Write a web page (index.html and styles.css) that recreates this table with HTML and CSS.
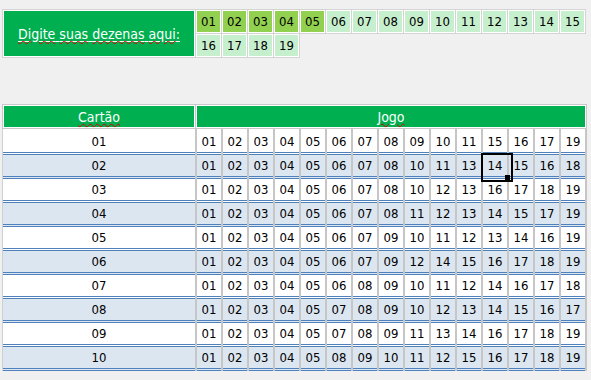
FILE: index.html
```html
<!DOCTYPE html>
<html lang="pt">
<head>
<meta charset="utf-8">
<title>Dezenas</title>
<link rel="stylesheet" href="styles.css">
</head>
<body>
<div class="top">
  <div class="prompt"><span class="link"><span class="sp">Digite</span> <span class="sp">suas</span> <span class="sp">dezenas</span> <span class="sp">aqui</span>:</span></div>
  <div class="n on">01</div><div class="n on">02</div><div class="n on">03</div><div class="n on">04</div><div class="n on">05</div>
  <div class="n">06</div><div class="n">07</div><div class="n">08</div><div class="n">09</div><div class="n">10</div>
  <div class="n">11</div><div class="n">12</div><div class="n">13</div><div class="n">14</div><div class="n">15</div>
  <div class="n first2">16</div><div class="n">17</div><div class="n">18</div><div class="n">19</div>
</div>

<div class="table">
  <div class="thead">
    <div><span class="sp">Cartão</span></div>
    <div><span class="sp">Jogo</span></div>
  </div>
  <div class="row r1"><div class="k">01</div><div class="c">01</div><div class="c">02</div><div class="c">03</div><div class="c">04</div><div class="c">05</div><div class="c">06</div><div class="c">07</div><div class="c">08</div><div class="c">09</div><div class="c">10</div><div class="c">11</div><div class="c">15</div><div class="c">16</div><div class="c">17</div><div class="c">19</div></div>
  <div class="row alt"><div class="k">02</div><div class="c">01</div><div class="c">02</div><div class="c">03</div><div class="c">04</div><div class="c">05</div><div class="c">06</div><div class="c">07</div><div class="c">08</div><div class="c">10</div><div class="c">11</div><div class="c">13</div><div class="c act">14</div><div class="c">15</div><div class="c">16</div><div class="c">18</div></div>
  <div class="row"><div class="k">03</div><div class="c">01</div><div class="c">02</div><div class="c">03</div><div class="c">04</div><div class="c">05</div><div class="c">06</div><div class="c">07</div><div class="c">08</div><div class="c">10</div><div class="c">12</div><div class="c">13</div><div class="c">16</div><div class="c">17</div><div class="c">18</div><div class="c">19</div></div>
  <div class="row alt"><div class="k">04</div><div class="c">01</div><div class="c">02</div><div class="c">03</div><div class="c">04</div><div class="c">05</div><div class="c">06</div><div class="c">07</div><div class="c">08</div><div class="c">11</div><div class="c">12</div><div class="c">13</div><div class="c">14</div><div class="c">15</div><div class="c">17</div><div class="c">19</div></div>
  <div class="row"><div class="k">05</div><div class="c">01</div><div class="c">02</div><div class="c">03</div><div class="c">04</div><div class="c">05</div><div class="c">06</div><div class="c">07</div><div class="c">09</div><div class="c">10</div><div class="c">11</div><div class="c">12</div><div class="c">13</div><div class="c">14</div><div class="c">16</div><div class="c">19</div></div>
  <div class="row alt"><div class="k">06</div><div class="c">01</div><div class="c">02</div><div class="c">03</div><div class="c">04</div><div class="c">05</div><div class="c">06</div><div class="c">07</div><div class="c">09</div><div class="c">12</div><div class="c">14</div><div class="c">15</div><div class="c">16</div><div class="c">17</div><div class="c">18</div><div class="c">19</div></div>
  <div class="row"><div class="k">07</div><div class="c">01</div><div class="c">02</div><div class="c">03</div><div class="c">04</div><div class="c">05</div><div class="c">06</div><div class="c">08</div><div class="c">09</div><div class="c">10</div><div class="c">11</div><div class="c">12</div><div class="c">14</div><div class="c">16</div><div class="c">17</div><div class="c">18</div></div>
  <div class="row alt"><div class="k">08</div><div class="c">01</div><div class="c">02</div><div class="c">03</div><div class="c">04</div><div class="c">05</div><div class="c">07</div><div class="c">08</div><div class="c">09</div><div class="c">10</div><div class="c">12</div><div class="c">13</div><div class="c">14</div><div class="c">15</div><div class="c">16</div><div class="c">17</div></div>
  <div class="row"><div class="k">09</div><div class="c">01</div><div class="c">02</div><div class="c">03</div><div class="c">04</div><div class="c">05</div><div class="c">07</div><div class="c">08</div><div class="c">09</div><div class="c">11</div><div class="c">13</div><div class="c">14</div><div class="c">16</div><div class="c">17</div><div class="c">18</div><div class="c">19</div></div>
  <div class="row alt"><div class="k">10</div><div class="c">01</div><div class="c">02</div><div class="c">03</div><div class="c">04</div><div class="c">05</div><div class="c">08</div><div class="c">09</div><div class="c">10</div><div class="c">11</div><div class="c">12</div><div class="c">15</div><div class="c">16</div><div class="c">17</div><div class="c">18</div><div class="c">19</div></div>
</div>
</body>
</html>
```
FILE: styles.css
```css
* { box-sizing: border-box; }

body {
  margin: 0;
  background: #f0f0f0;
  color: #000;
  font-family: "DejaVu Sans Condensed", "DejaVu Sans", Verdana, sans-serif;
  font-size: 13px;
}

/* top picker */
.top {
  display: grid;
  grid-template-columns: 192px repeat(15, 25px);
  grid-template-rows: 23px 23px;
  gap: 1px;
  padding: 1px;
  width: 584px;
  margin: 9px 0 0 2px;
}

.top > div {
  border: 1px solid #fff;
  box-shadow: 0 0 0 1px #d4d4d4;
  display: flex;
  align-items: center;
  justify-content: center;
}

.prompt {
  grid-row: span 2;
  background: #00b050;
  color: #fff;
  font-size: 14px;
}

.link {
  text-decoration: underline #fff;
  text-underline-offset: 2px;
}

.sp {
  text-decoration: underline wavy #e00000;
  text-decoration-thickness: 1px;
  text-underline-offset: 1px;
}

.n { background: #c6efce; }
.n.on { background: #92d050; }
.first2 { grid-column: 2; }

/* table */
.table {
  margin: 46px 0 0 2px;
  width: 585px;
}

.thead {
  display: grid;
  grid-template-columns: 192px 390px;
  grid-template-rows: 23px;
  gap: 1px;
  padding: 1px;
}

.thead > div {
  background: #00b050;
  border: 1px solid #fff;
  box-shadow: 0 0 0 1px #c8c8c8;
  color: #fff;
  font-size: 14px;
  display: flex;
  align-items: center;
  justify-content: center;
}

.row {
  display: flex;
  height: 24px;
  background: #fff;
  border-left: 1px solid #d0d0d0;
  border-right: 2px solid #c6c6c6;
}

.row.r1 { height: 26px; }
.row.alt { background: #dce6f1; }

.k, .c {
  display: flex;
  align-items: center;
  justify-content: center;
  padding-bottom: 3px;
  background: linear-gradient(to top, #4f81bd 0 1px, transparent 1px 2px, #4f81bd 2px 3px, transparent 3px);
}

.r1 .k, .r1 .c { padding-top: 1px; }

.k { width: 192px; }

.c {
  width: 26px;
  border-left: 2px solid #c6c6c6;
}

.act { position: relative; }

.act::before {
  content: "";
  position: absolute;
  left: -2px;
  top: -2px;
  width: 28px;
  height: 25px;
  border: 2px solid #000;
  z-index: 1;
}

.act::after {
  content: "";
  position: absolute;
  left: 22px;
  top: 20px;
  width: 5px;
  height: 5px;
  background: #000;
  z-index: 2;
}
```
